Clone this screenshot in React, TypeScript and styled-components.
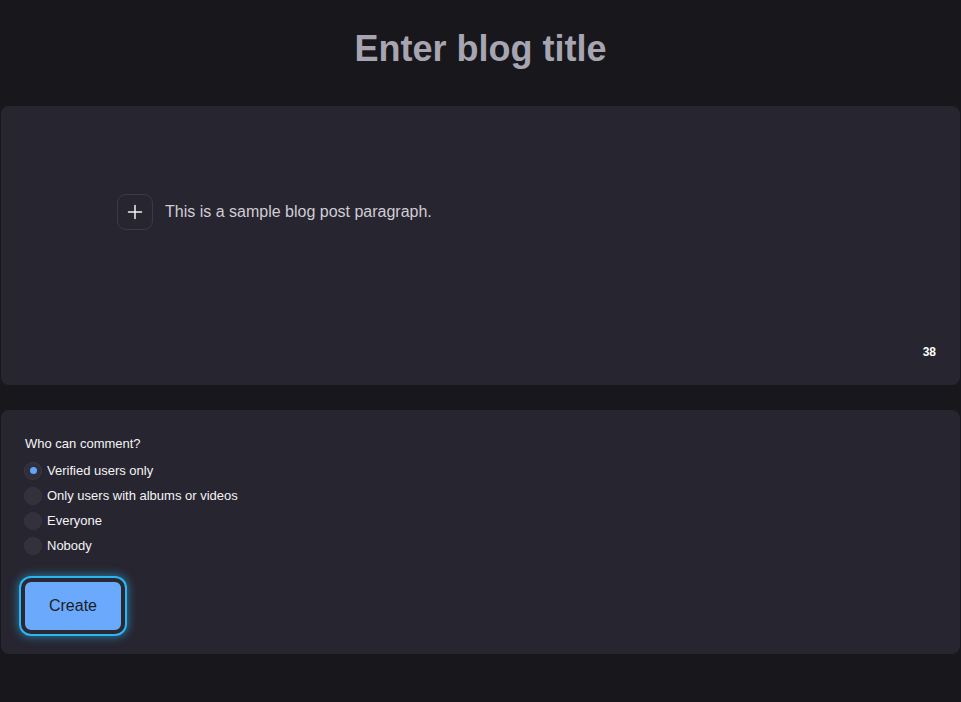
import React, { useState } from "react";
import styled, { createGlobalStyle } from "styled-components";

const Global = createGlobalStyle`
  html, body { margin: 0; padding: 0; background: #18171c; }
  body { font-family: "Liberation Sans", Arial, sans-serif; }
  * { box-sizing: border-box; }
`;

const Page = styled.div`
  min-height: 702px;
  padding: 28px 1px 0;
  display: flex;
  flex-direction: column;
`;

const Title = styled.h1`
  margin: 0 0 37px;
  text-align: center;
  font-size: 36px;
  line-height: 41px;
  font-weight: 700;
  color: #a7a5b1;
`;

const Panel = styled.section`
  background: #27252f;
  border-radius: 8px;
`;

const EditorPanel = styled(Panel)`
  height: 279px;
  padding: 88px 24px 26px 116px;
  display: flex;
  flex-direction: column;
  margin-bottom: 25px;
`;

const BlockRow = styled.div`
  display: flex;
  align-items: center;
  gap: 12px;
`;

const AddButton = styled.button`
  width: 36px;
  height: 36px;
  border-radius: 9px;
  border: 1px solid #3b3945;
  background: transparent;
  color: #f2f2f5;
  display: flex;
  align-items: center;
  justify-content: center;
  padding: 0;
`;

const Paragraph = styled.p`
  margin: 0;
  font-size: 16px;
  color: #cfcdd6;
`;

const Counter = styled.div`
  margin-top: auto;
  align-self: flex-end;
  font-size: 12px;
  line-height: 14px;
  font-weight: 700;
  color: #ffffff;
`;

const SettingsPanel = styled(Panel)`
  padding: 26px 24px 20px 23px;
  display: flex;
  flex-direction: column;
  align-items: flex-start;
`;

const Legend = styled.div`
  font-size: 13px;
  line-height: 15px;
  color: #f4f4f6;
  margin: 0 0 7px 1px;
`;

const Option = styled.label`
  display: flex;
  align-items: center;
  gap: 5px;
  height: 25px;
  font-size: 13px;
  color: #f4f4f6;
  cursor: pointer;
`;

const Circle = styled.span<{ $checked: boolean }>`
  width: 18px;
  height: 18px;
  border-radius: 50%;
  background: ${(p) => (p.$checked ? "#302e38" : "#33313b")};
  box-shadow: inset 0 0 0 1px ${(p) => (p.$checked ? "#3a3843" : "#35333d")};
  display: flex;
  align-items: center;
  justify-content: center;
  &::after {
    content: "";
    width: 7px;
    height: 7px;
    border-radius: 50%;
    background: #60a5fa;
    display: ${(p) => (p.$checked ? "block" : "none")};
  }
`;

const CreateButton = styled.button`
  margin: 20px 0 0 -3px;
  width: 104px;
  height: 56px;
  border: 4px solid #2a2831;
  border-radius: 10px;
  background: #6ba9fd;
  color: #1e1d24;
  font-family: "Liberation Sans", Arial, sans-serif;
  font-size: 16px;
  box-shadow: 0 0 0 2px #2db4f2, 0 0 10px 3px rgba(41, 182, 246, 0.55);
  cursor: pointer;
`;

const options = [
  "Verified users only",
  "Only users with albums or videos",
  "Everyone",
  "Nobody",
];

export default function App() {
  const [sel, setSel] = useState(0);
  return (
    <>
      <Global />
      <Page>
        <Title>Enter blog title</Title>
        <EditorPanel>
          <BlockRow>
            <AddButton aria-label="Add block">
              <svg width="16" height="16" viewBox="0 0 16 16" fill="none" stroke="currentColor" strokeWidth="1.5" strokeLinecap="round">
                <path d="M8 1.5v13M1.5 8h13" />
              </svg>
            </AddButton>
            <Paragraph>This is a sample blog post paragraph.</Paragraph>
          </BlockRow>
          <Counter>38</Counter>
        </EditorPanel>
        <SettingsPanel>
          <Legend>Who can comment?</Legend>
          {options.map((o, i) => (
            <Option key={o} onClick={() => setSel(i)}>
              <Circle $checked={sel === i} />
              {o}
            </Option>
          ))}
          <CreateButton>Create</CreateButton>
        </SettingsPanel>
      </Page>
    </>
  );
}
